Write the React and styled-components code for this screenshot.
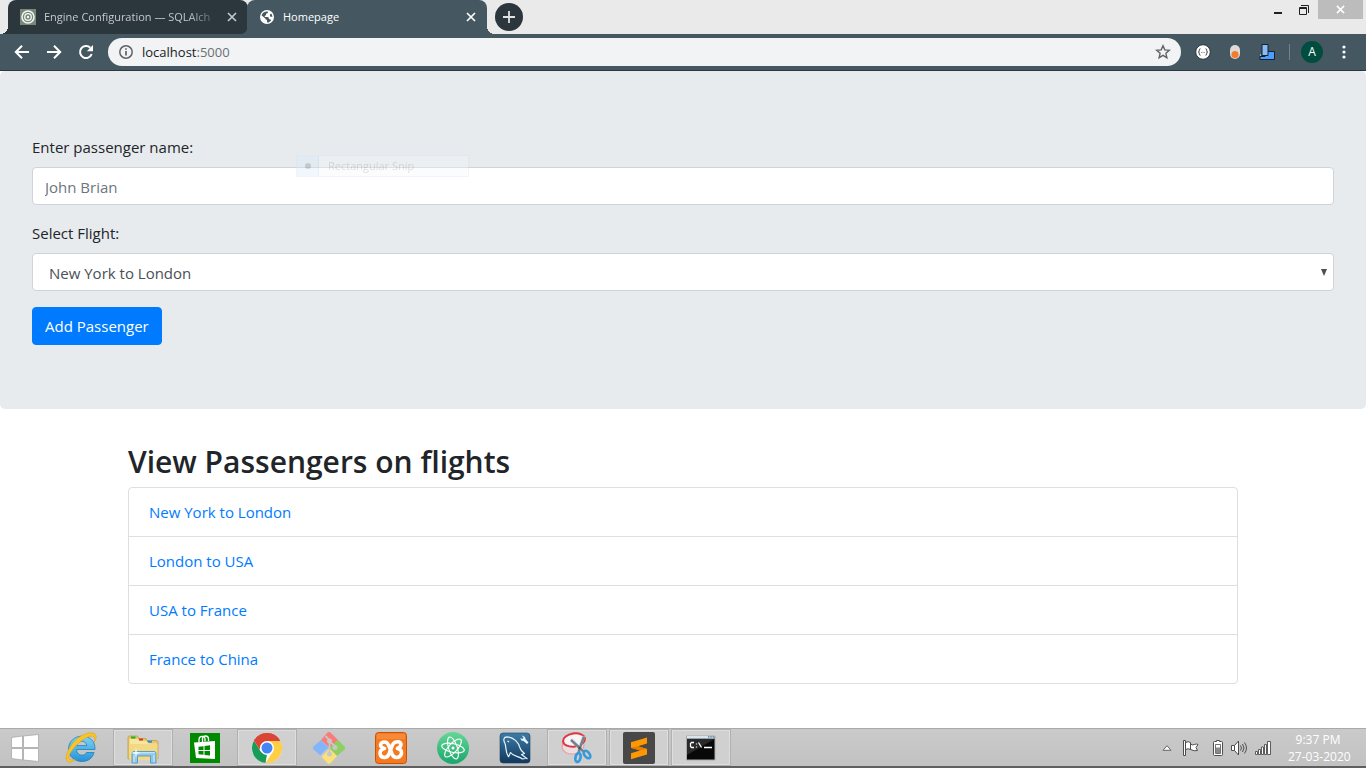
import React from "react";
import styled, { createGlobalStyle, css } from "styled-components";

const GlobalStyle = createGlobalStyle`
  *, *::before, *::after { box-sizing: border-box; }
  body {
    margin: 0;
    background: #fff;
    color: #212529;
    font-family: "Segoe UI", "Open Sans", "Noto Sans", sans-serif;
    font-size: 15px;
    line-height: 24px;
  }
  button, input, select { font: inherit; }
  svg { display: block; flex: none; }
`;

const Screen = styled.div`
  min-height: 100vh;
  display: flex;
  flex-direction: column;
`;

/* ---------- browser window ---------- */

const TabStrip = styled.header`
  display: flex;
  height: 34px;
  padding-left: 8px;
  background: #eaeaea;
`;

const Tab = styled.div`
  position: relative;
  display: flex;
  align-items: center;
  width: 240px;
  padding: 0 11px 0 12px;
  gap: 8px;
  border-radius: 8px 8px 0 0;
  font-size: 11px;
  line-height: 16px;
  color: ${(p) => (p.$active ? "#fff" : "#c3c8cb")};
  background: ${(p) => (p.$active ? "#455761" : "#2b363d")};
  ${(p) =>
    p.$active
      ? css`
          margin-left: -1px;
          &::after {
            content: "";
            position: absolute;
            left: 100%;
            bottom: 0;
            width: 8px;
            height: 8px;
            background: radial-gradient(circle at 100% 0, transparent 8px, #455761 8px);
          }
        `
      : css`
          border-bottom-right-radius: 8px;
          box-shadow: 4px 8px 0 -4px #455761;
          &::before {
            content: "";
            position: absolute;
            right: 100%;
            bottom: 0;
            width: 8px;
            height: 8px;
            background: radial-gradient(circle at 0 0, transparent 8px, #2b363d 8px);
          }
        `}
`;

const TabTitle = styled.span`
  flex: 1;
  white-space: nowrap;
  ${(p) =>
    p.$fade &&
    css`
      mask-image: linear-gradient(to right, #000 calc(100% - 32px), rgba(0, 0, 0, 0.1));
    `}
`;

const PlainButton = styled.button`
  display: grid;
  place-items: center;
  padding: 0;
  border: 0;
  background: none;
  color: inherit;
`;

const TabClose = styled(PlainButton)`
  width: 10px;
  height: 16px;
`;

const NewTab = styled(PlainButton)`
  align-self: center;
  width: 28px;
  height: 28px;
  margin-left: 8px;
  border-radius: 50%;
  background: #2b363d;
  color: #dfe3e5;
`;

const WindowControls = styled.div`
  display: flex;
  margin-left: auto;
  margin-right: 3px;
  color: #202020;
`;

const WindowButton = styled(PlainButton)`
  width: ${(p) => (p.$close ? 45 : 26)}px;
  height: 19px;
  ${(p) => p.$close && "margin-left: 1px; background: #bcbcbc; color: #fff;"}
`;

const Toolbar = styled.nav`
  display: flex;
  align-items: center;
  height: 37px;
  padding: 0 6px;
  border-bottom: 1px solid #2c373e;
  background: #455761;
  color: #fff;
`;

const ToolButton = styled(PlainButton)`
  width: 32px;
  height: 32px;
`;

const Omnibox = styled.div`
  flex: 1;
  display: flex;
  align-items: center;
  height: 28px;
  margin: 0 6px;
  padding: 0 10px;
  gap: 8px;
  border-radius: 14px;
  background: #f1f3f4;
  color: #5f6368;
`;

const Address = styled.div`
  flex: 1;
  font-size: 13px;
  line-height: 20px;
  color: #6b6f73;
  b { font-weight: 400; color: #202124; }
`;

const Divider = styled.i`
  width: 1px;
  height: 16px;
  margin: 0 11px 0 6px;
  background: #74838b;
`;

const Avatar = styled(PlainButton)`
  width: 22px;
  height: 22px;
  margin-right: 5px;
  border-radius: 50%;
  background: #004d40;
  font-size: 12px;
  line-height: 16px;
  color: #fff;
`;

/* ---------- web page ---------- */

const Page = styled.main`
  flex: 1;
`;

const Jumbotron = styled.form`
  position: relative;
  display: flex;
  flex-direction: column;
  align-items: stretch;
  padding: 64px 32px;
  border-radius: 5px;
  background: #e8ebee;
`;

const Field = styled.div`
  display: flex;
  flex-direction: column;
  gap: 8px;
  margin-bottom: 16px;
`;

const controlStyle = css`
  width: 100%;
  height: 38px;
  border: 1px solid #ced4da;
  border-radius: 4px;
  background: #fff;
  color: #495057;
  outline: none;
`;

const TextInput = styled.input`
  ${controlStyle}
  padding: 8px 12px 6px;
  &::placeholder { color: #6c757d; opacity: 1; }
`;

const SelectBox = styled.div`
  position: relative;
  svg {
    position: absolute;
    right: 7px;
    top: 16px;
    pointer-events: none;
  }
`;

const Select = styled.select`
  ${controlStyle}
  appearance: none;
  padding: 7px 16px 6px;
`;

const PrimaryButton = styled.button`
  align-self: flex-start;
  height: 38px;
  padding: 0 12px;
  border: 1px solid #007bff;
  border-radius: 4px;
  background: #007bff;
  color: #fff;
`;

const SnipGhost = styled.div`
  position: absolute;
  left: 296px;
  top: 84px;
  display: flex;
  align-items: center;
  width: 173px;
  height: 22px;
  border: 1px solid #cfe4f7;
  background: #f4f8fc;
  font-size: 11px;
  line-height: 16px;
  color: #a8a8a8;
  opacity: 0.35;
  pointer-events: none;
`;

const GhostMark = styled.span`
  display: grid;
  place-items: center;
  width: 22px;
  height: 20px;
  margin-right: 9px;
  border-right: 1px solid #b9d8f4;
  background: #dcebfa;
`;

const Container = styled.section`
  max-width: 1140px;
  margin: 32px auto 44px;
  padding: 0 15px;
`;

const Heading = styled.h2`
  margin: 0 0 4px;
  font-size: 30px;
  font-weight: 600;
  line-height: 42px;
`;

const FlightList = styled.ul`
  margin: 0;
  padding: 0;
  list-style: none;
  border: 1px solid #dfdfdf;
  border-radius: 4px;
`;

const FlightItem = styled.li`
  padding: 12px 20px;
  & + & { border-top: 1px solid #dfdfdf; }
`;

const FlightLink = styled.a`
  color: #007bff;
  text-decoration: none;
`;

/* ---------- desktop taskbar ---------- */

const Taskbar = styled.footer`
  display: flex;
  height: 40px;
  border-top: 1px solid #a9a9a9;
  border-bottom: 2px solid #5f5f5f;
  background: linear-gradient(#cacaca, #c2c2c2);
`;

const StartButton = styled(PlainButton)`
  width: 51px;
  padding-right: 2px;
`;

const Apps = styled.div`
  display: flex;
  gap: 2px;
`;

const AppButton = styled(PlainButton)`
  width: 60px;
  padding-top: 1px;
  ${(p) =>
    p.$open &&
    css`
      background: #d0d0d0;
      box-shadow: inset 0 0 0 1px #b0b0b0, inset 0 0 0 2px #dedede;
    `}
`;

const Tray = styled.div`
  display: flex;
  align-items: center;
  margin-left: auto;
  padding-right: 18px;
`;

const TrayButton = styled(PlainButton)`
  width: 24px;
  height: 24px;
  margin-right: ${(p) => p.$gap || 0}px;
`;

const Clock = styled.time`
  width: 60px;
  margin-left: 13px;
  font-size: 12px;
  line-height: 17px;
  text-align: center;
  white-space: nowrap;
  color: #fff;
`;

/* ---------- drawings ---------- */

const CloseIcon = ({ size = 10 }) => (
  <svg width={size} height={size} viewBox="0 0 10 10" fill="none" stroke="currentColor" strokeWidth="1.7">
    <path d="M1 1l8 8M9 1L1 9" />
  </svg>
);

const App32 = ({ children }) => (
  <svg width="32" height="32" viewBox="0 0 32 32" fill="none">{children}</svg>
);

const IeIcon = () => (
  <App32>
    <defs>
      <linearGradient id="ie" x1="0" y1="0" x2="0" y2="1">
        <stop offset="0" stopColor="#7fd4f6" />
        <stop offset="1" stopColor="#2592d6" />
      </linearGradient>
    </defs>
    <path d="M30 17.500H11.500c.3 3.600 2.400 5.700 5.400 5.700 2.200 0 3.600-.9 4.500-2.700h7.700C27.300 26.500 23 29.500 17 29.500 9.300 29.500 3.500 24.200 3.500 17 3.500 9.800 9.300 4.200 16.800 4.200 25.200 4.200 30.400 9.500 30 17.500zM21.800 13.600c-.4-2.800-2.300-4.400-5.100-4.400s-4.600 1.600-5.100 4.400z" fill="url(#ie)" stroke="#2180bd" strokeWidth=".8" />
    <path d="M2.500 29.800C-1.500 25.800 4 13 13 6 19.500 1 28 -.8 30.500 2.500c1.400 1.900.5 5-1.400 8 .9-3 .8-4.800-.3-5.700-2.200-1.800-8 .2-13.200 4.700C8 15.800 2.700 23.400 4 26.600c.7 1.800 3.500 1.700 6.400.6-3 2.500-6.400 4.100-7.900 2.600z" fill="#f6c52c" stroke="#dc9d10" strokeWidth=".5" />
  </App32>
);

const ExplorerIcon = () => (
  <App32>
    <path d="M1 5.500q0-1.500 1.500-1.500h8l1.500 2.500h7l1 2h9q2 0 2 2V27H1z" fill="#e8c768" stroke="#b99743" strokeWidth=".7" />
    <path d="M4 4.500h4.500v2H4z" fill="#19b52c" />
    <path d="M12 6.500h4v2h-4z" fill="#d93a26" />
    <path d="M20 8.700h5v2h-5z" fill="#2f8ade" />
    <path d="M2.500 7H11l1.500 2H20l1.500 2.500H30V27H2.500z" fill="#f8e6a0" />
    <path d="M2.500 12h28v16h-28z" fill="#f3d985" />
    <path d="M5 31V21.500q0-2 2-2h20q2 0 2 2V31h-5.500v-7h-13v7z" fill="#8cc7ea" stroke="#4c91bd" strokeWidth=".8" />
    <path d="M6 20.800h22M7 23v7.500M27 23v7.500" stroke="#d5effc" />
    <path d="M9 15l.8 5 4.200 1-4.200 1-.8 5-.8-5L4 21l4.200-1z" fill="#eefaff" />
  </App32>
);

const StoreIcon = () => (
  <App32>
    <path d="M1 1h30v30H1z" fill="#008a00" />
    <path d="M5 10.500l21-1.500v18L7 26z" fill="#fff" />
    <path d="M10 10V7.500q0-3 3-3.200 3-.2 3 2.700V9.500M13.500 10V6.500q.4-2.500 3-2.500 3 0 3 3V9" stroke="#fff" strokeWidth="1.300" />
    <path d="M9.500 14.800l5-.6v3.800h-5zm6-.7l5.500-.8V18h-5.500zM9.500 19h5v3.800l-5-.6zm6 0H21v4.600l-5.500-.6z" fill="#008a00" />
  </App32>
);

const ChromeIcon = () => (
  <App32>
    <circle cx="16" cy="16" r="15" fill="#fff" />
    <path d="M16 16L3 8.500a15 15 0 0 1 26 0z" fill="#da4536" />
    <path d="M3 8.500L9.900 19.800 16 22.500 14.500 31A15 15 0 0 1 3 8.500z" fill="#189c59" />
    <path d="M16 9h13.300A15 15 0 0 1 14.500 31L22 19.500z" fill="#fecf46" />
    <path d="M3 8.500A15 15 0 0 1 29.300 9H16l-6 3.500-1.500 5z" fill="#da4536" />
    <circle cx="16" cy="16" r="7" fill="#fff" />
    <circle cx="16" cy="16" r="5.500" fill="#4285f4" />
  </App32>
);

const GitIcon = () => (
  <App32>
    <path d="M16 0q1 0 1.700.700L25 8l-8 8-9-8L14.300.700Q15 0 16 0z" fill="#fb7b78" />
    <path d="M25 8l6.500 6.500q1 1.500 0 3L24 24l-8-8z" fill="#8bd060" />
    <path d="M16 16l8 8-6.500 7.300q-1.500 1-3 0L8 24z" fill="#fbe178" />
    <path d="M8 8l8 8-8 8L.500 17.500q-1-1.500 0-3z" fill="#83b5fb" />
    <path d="M12.500 4l4 4v15M17 9.500l6 6M8 24l7-7" stroke="#c7c7c7" strokeWidth="1.800" />
    <circle cx="16.500" cy="9" r="2.500" fill="#c7c7c7" />
    <circle cx="22" cy="15.500" r="2.500" fill="#c7c7c7" />
    <circle cx="16.500" cy="22" r="2.500" fill="#c7c7c7" />
  </App32>
);

const XamppIcon = () => (
  <App32>
    <rect x=".5" y=".5" width="31" height="31" rx="3" fill="#f47920" stroke="#cc5200" />
    <path d="M2 2h28v5H2z" fill="#fa9a55" opacity=".5" />
    <path d="M19.500 10.500q5.500-2 6.500 1.500 0 3-3.500 4.500 4.500 1 4 5-1 4-5 4-3 0-4.500-3.500l-3-8q-1.500-4-4.500-4-3.500 0-4 3 0 2.500 4 3.500-4.500 1-4.500 5 .5 4 4.500 4 3 0 4.500-3.500l3-8q1-2.500 2.500-3.500" stroke="#fff" strokeWidth="3.600" strokeLinecap="round" strokeLinejoin="round" />
  </App32>
);

const AtomIcon = () => (
  <App32>
    <defs>
      <linearGradient id="atom" x1="0" y1="0" x2="0" y2="1">
        <stop offset="0" stopColor="#65d797" />
        <stop offset="1" stopColor="#19a66c" />
      </linearGradient>
    </defs>
    <circle cx="16" cy="16" r="16" fill="url(#atom)" />
    <g stroke="#fff" strokeWidth="1.100">
      <ellipse cx="16" cy="16" rx="11.500" ry="4.300" transform="rotate(12 16 16)" />
      <ellipse cx="16" cy="16" rx="11.500" ry="4.300" transform="rotate(72 16 16)" />
      <ellipse cx="16" cy="16" rx="11.500" ry="4.300" transform="rotate(132 16 16)" />
    </g>
    <circle cx="16" cy="16" r="1.500" fill="#fff" />
  </App32>
);

const MysqlIcon = () => (
  <App32>
    <defs>
      <linearGradient id="mysql" x1="0" y1="0" x2="0" y2="1">
        <stop offset="0" stopColor="#3c7ca7" />
        <stop offset="1" stopColor="#12385c" />
      </linearGradient>
    </defs>
    <rect x="1" y="1" width="30" height="30" rx="3" fill="url(#mysql)" stroke="#174569" strokeWidth=".6" />
    <path d="M9.500 25C6 19.500 7.500 15.500 6 11.500 4 8 4.500 4.800 8 4.800c7 .5 12 6 13 11.200.7 2.500 1.500 3.500 4.500 5.500l-3 1 6 4.500M9.500 25l2-4.500c3 4.500 8 3 12 6.500l3-.5" stroke="#e9f4fa" strokeWidth="1.200" strokeLinejoin="round" />
    <path d="M8.500 9l1.500 1" stroke="#e9f4fa" strokeWidth="1.300" />
    <path d="M22.500 3.500l2 2-1 1.500-2-1q0 3 3 3l3.500 3 1.500-1.500-3-3.500q0-3-4-3.500z" fill="#e9f4fa" />
  </App32>
);

const SnipIcon = () => (
  <App32>
    <ellipse cx="12" cy="14" rx="11" ry="8" fill="#e9dfe0" stroke="#eb9ba0" transform="rotate(-8 12 14)" />
    <ellipse cx="13" cy="8" rx="11" ry="6.500" fill="#f8f4f5" stroke="#e0343f" strokeWidth="2" transform="rotate(-8 13 8)" />
    <path d="M22.500 4L17 20M10 7l12 12" stroke="#dfe4e8" strokeWidth="3.500" />
    <path d="M23 4.500L17.500 20M10 8l12.500 11.500" stroke="#73818c" strokeWidth="2.400" />
    <ellipse cx="17" cy="25.500" rx="2.500" ry="4.500" stroke="#3a9ad9" strokeWidth="2.700" transform="rotate(14 17 25.500)" />
    <ellipse cx="26" cy="22.500" rx="2.500" ry="4.300" stroke="#3a9ad9" strokeWidth="2.700" transform="rotate(-38 26 22.500)" />
    <circle cx="18.500" cy="16" r="1.300" fill="#43515c" />
  </App32>
);

const SublimeIcon = () => (
  <App32>
    <rect width="32" height="32" rx="2" fill="#484848" />
    <path d="M24 5.500v6l-9 2.700 9 2.800v5.500L8 27.300v-6l9-2.800-9-2.700v-5.500z" fill="#ff9800" />
    <path d="M8 15.800l9 2.700 7-1.500-9-2.800z" fill="#e67c00" />
  </App32>
);

const CmdIcon = () => (
  <App32>
    <path d="M1.500 4h28.500v24H1.500z" fill="#080808" stroke="#aaa" />
    <path d="M2 4h27.500v2.700H2z" fill="#dae4ed" />
    <path d="M23 4.800h1.500M25.300 4.800h1.500M27.500 4.800H29" stroke="#49739b" strokeWidth="1.300" />
    <path d="M2 7h27.500L2 23z" fill="#3c3c3c" opacity=".65" />
    <path d="M9 10.500H6.500l-1 1v3l1 1H9M11.500 11.500v1M11.500 14.500v1M13.500 10.500l3 5M19 15.500h8" stroke="#fff" strokeWidth="1.300" />
  </App32>
);

const apps = [
  { name: "Internet Explorer", Icon: IeIcon },
  { name: "File Explorer", Icon: ExplorerIcon, open: true },
  { name: "Store", Icon: StoreIcon },
  { name: "Google Chrome", Icon: ChromeIcon, open: true },
  { name: "Git GUI", Icon: GitIcon },
  { name: "XAMPP", Icon: XamppIcon },
  { name: "Atom", Icon: AtomIcon },
  { name: "MySQL Workbench", Icon: MysqlIcon },
  { name: "Snipping Tool", Icon: SnipIcon, open: true },
  { name: "Sublime Text", Icon: SublimeIcon, open: true },
  { name: "Command Prompt", Icon: CmdIcon, open: true },
];

const flights = ["New York to London", "London to USA", "USA to France", "France to China"];

function BrowserChrome() {
  return (
    <>
      <TabStrip>
        <Tab>
          <svg width="16" height="16" viewBox="0 0 16 16" fill="none">
            <path d="M0 0h16v16H0z" fill="#788878" />
            <circle cx="8" cy="8" r="6" stroke="#f5f7f5" strokeWidth="1.500" />
            <circle cx="8" cy="8" r="3.300" stroke="#f5f7f5" strokeWidth="1.300" />
            <circle cx="8" cy="8" r="1.200" fill="#f5f7f5" />
          </svg>
          <TabTitle $fade>Engine Configuration — SQLAlch</TabTitle>
          <TabClose aria-label="Close Engine Configuration tab"><CloseIcon /></TabClose>
        </Tab>
        <Tab $active>
          <svg width="16" height="16" viewBox="0 0 16 16">
            <circle cx="8" cy="8" r="7" fill="#fff" />
            <path d="M7.500 2.600Q9 2 9 3.500q-.2 1-2 1.300V6q0 .7-1.200.8v1.300h2.700q1.500.2 1.500 2 2.200.2 2 1.600L9.500 13.500q-1.500.500-1.500-1V11Q6.500 11 6.300 9.600L2.500 6.200Q4 3 7.500 2.600zM11 6q0-1.500 1.500-1.300l1 3H11.500q-1-.4-.5-1.700z" fill="#455761" />
          </svg>
          <TabTitle>Homepage</TabTitle>
          <TabClose aria-label="Close Homepage tab"><CloseIcon /></TabClose>
        </Tab>
        <NewTab aria-label="New tab">
          <svg width="12" height="12" viewBox="0 0 12 12" stroke="currentColor" strokeWidth="1.800">
            <path d="M6 0v12M0 6h12" />
          </svg>
        </NewTab>
        <WindowControls>
          <WindowButton aria-label="Minimize">
            <svg width="10" height="10" viewBox="0 0 10 10"><path d="M1 7h8v2H1z" fill="currentColor" /></svg>
          </WindowButton>
          <WindowButton aria-label="Restore">
            <svg width="10" height="10" viewBox="0 0 10 10" fill="none" stroke="currentColor">
              <path d="M.500 2.500h7v7h-7zM.500 3.500h7M2 .500h7.500V8" />
            </svg>
          </WindowButton>
          <WindowButton $close aria-label="Close"><CloseIcon size={9} /></WindowButton>
        </WindowControls>
      </TabStrip>
      <Toolbar aria-label="Browser toolbar">
        <ToolButton aria-label="Back">
          <svg width="16" height="16" viewBox="0 0 16 16" fill="none" stroke="currentColor" strokeWidth="2">
            <path d="M15 8H2.500M8 1.700L1.800 8 8 14.300" />
          </svg>
        </ToolButton>
        <ToolButton aria-label="Forward">
          <svg width="16" height="16" viewBox="0 0 16 16" fill="none" stroke="currentColor" strokeWidth="2">
            <path d="M1 8h12.500M8 1.700L14.200 8 8 14.300" />
          </svg>
        </ToolButton>
        <ToolButton aria-label="Reload">
          <svg width="16" height="16" viewBox="0 0 16 16" fill="none">
            <path d="M13.700 10A6 6 0 1 1 12.300 3.800" stroke="currentColor" strokeWidth="2" />
            <path d="M15 1v6.200H8.800z" fill="currentColor" />
          </svg>
        </ToolButton>
        <Omnibox>
          <svg width="16" height="16" viewBox="0 0 16 16" fill="none" stroke="currentColor" strokeWidth="1.500">
            <circle cx="8" cy="8" r="6.200" />
            <path d="M8 7v4.500M8 4.300v1.500" strokeWidth="1.700" />
          </svg>
          <Address><b>localhost</b>:5000</Address>
          <PlainButton aria-label="Bookmark this page">
            <svg width="16" height="16" viewBox="0 0 16 16" fill="none" stroke="currentColor" strokeWidth="1.400">
              <path d="M8 1.800l1.800 4.100 4.500.400-3.400 3 1 4.400L8 11.400l-3.900 2.300 1-4.400-3.400-3 4.500-.400z" />
            </svg>
          </PlainButton>
        </Omnibox>
        <ToolButton aria-label="JSON viewer extension">
          <svg width="16" height="16" viewBox="0 0 16 16" fill="none">
            <circle cx="8" cy="8" r="7.300" fill="#fff" stroke="#2a343a" strokeWidth="1" />
            <path d="M5.500 4.800q-1.500 0-1.200 1.500Q4.500 8 3.300 8q1.200 0 1 1.700-.3 1.500 1.200 1.500M10.500 4.800q1.500 0 1.200 1.500-.2 1.700 1 1.700-1.200 0-1 1.700.3 1.500-1.200 1.500M6.500 8.500h.8M8.700 8.500h.8" stroke="#444" />
          </svg>
        </ToolButton>
        <ToolButton aria-label="Toggle extension">
          <svg width="16" height="16" viewBox="0 0 16 16">
            <rect x="3" y="1" width="10" height="14" rx="5" fill="#ddd9d4" />
            <circle cx="8" cy="10.500" r="3.500" fill="#f47b2b" />
          </svg>
        </ToolButton>
        <ToolButton aria-label="Device extension">
          <svg width="16" height="16" viewBox="0 0 16 16">
            <path d="M6 7.500h9.500v8H1v-3h5z" fill="#4a9eff" stroke="#17232c" />
            <path d="M3 .500h6v11H3z" fill="#88bdf8" stroke="#17232c" />
            <path d="M1 10.500h1v1H1z" fill="#fff" />
          </svg>
        </ToolButton>
        <Divider />
        <Avatar aria-label="Profile">A</Avatar>
        <ToolButton aria-label="Browser menu">
          <svg width="4" height="14" viewBox="0 0 4 14" fill="currentColor">
            <circle cx="2" cy="2" r="1.600" /><circle cx="2" cy="7" r="1.600" /><circle cx="2" cy="12" r="1.600" />
          </svg>
        </ToolButton>
      </Toolbar>
    </>
  );
}

function PassengerForm() {
  return (
    <Jumbotron onSubmit={(e) => e.preventDefault()}>
      <Field>
        <label htmlFor="name">Enter passenger name:</label>
        <TextInput id="name" placeholder="John Brian" />
      </Field>
      <Field>
        <label htmlFor="flight">Select Flight:</label>
        <SelectBox>
          <Select id="flight">
            {flights.map((f) => <option key={f}>{f}</option>)}
          </Select>
          <svg width="6" height="7" viewBox="0 0 6 7"><path d="M0 0h6L3 7z" fill="#495057" /></svg>
        </SelectBox>
      </Field>
      <PrimaryButton>Add Passenger</PrimaryButton>
      <SnipGhost>
        <GhostMark>
          <svg width="6" height="6" viewBox="0 0 6 6"><circle cx="3" cy="3" r="3" fill="#8a8f94" /></svg>
        </GhostMark>
        Rectangular Snip
      </SnipGhost>
    </Jumbotron>
  );
}

function DesktopTaskbar() {
  return (
    <Taskbar>
      <StartButton aria-label="Start">
        <svg width="28" height="28" viewBox="0 0 28 28">
          <path d="M.500 3.500L11.500 2v11.500H.500zM12.500 2L27.500.500v13h-15zM.500 14.500h11V26L.500 24.500zM12.500 14.500h15v13L12.500 26z" fill="#fff" stroke="#aaa" strokeWidth=".8" />
        </svg>
      </StartButton>
      <Apps>
        {apps.map(({ name, Icon, open }) => (
          <AppButton key={name} $open={open} aria-label={name}><Icon /></AppButton>
        ))}
      </Apps>
      <Tray>
        <TrayButton aria-label="Show hidden icons">
          <svg width="10" height="6" viewBox="0 0 10 6"><path d="M5 .700L9 5.300H1z" fill="#fff" stroke="#666" /></svg>
        </TrayButton>
        <TrayButton $gap={3} aria-label="Action Center">
          <svg width="16" height="16" viewBox="0 0 16 16" fill="#fff" stroke="#4d4d4d">
            <path d="M.500.500h2v15h-2zM2.500 2.500q3-1.500 5 0v7q-2-1.500-5 0zM7.500 4q2 1.500 4 .500t3.500 0l-2 3 1.500 3q-3 1-7-1z" />
          </svg>
        </TrayButton>
        <TrayButton aria-label="Battery" $gap={-3}>
          <svg width="10" height="16" viewBox="0 0 10 16" fill="#fff" stroke="#4d4d4d">
            <path d="M3.500.500h3v1h2q1 0 1 1v12q0 1-1 1h-7q-1 0-1-1v-12q0-1 1-1h2z" />
            <path d="M3 7.500h4V13H3z" fill="#8a8a8a" stroke="none" />
            <path d="M2.500 4.500h5v9h-5z" fill="none" strokeWidth=".8" />
          </svg>
        </TrayButton>
        <TrayButton aria-label="Volume">
          <svg width="16" height="16" viewBox="0 0 16 16" fill="#fff" stroke="#4d4d4d">
            <path d="M.500 5.500h3l4-4.500v14l-4-4.500h-3zM3.500 5.500v5" />
            <path d="M9.500 5.500q2 2.500 0 5M11.500 4q3 4 0 8M13.500 2.500q4 5.500 0 11" fill="none" />
          </svg>
        </TrayButton>
        <TrayButton aria-label="Network">
          <svg width="16" height="14" viewBox="0 0 16 14" fill="#fff" stroke="#4d4d4d" strokeWidth=".9">
            <path d="M.500 10.500h2v3h-2zM3.500 8.500h2v5h-2zM6.500 6h2v7.500h-2zM9.500 3.500h2v10h-2zM12.500.500h3v13h-3z" />
          </svg>
        </TrayButton>
        <Clock dateTime="2020-03-27T21:37">9:37 PM<br />27-03-2020</Clock>
      </Tray>
    </Taskbar>
  );
}

export default function App() {
  return (
    <Screen>
      <GlobalStyle />
      <BrowserChrome />
      <Page>
        <PassengerForm />
        <Container>
          <Heading>View Passengers on flights</Heading>
          <FlightList>
            {flights.map((f) => (
              <FlightItem key={f}><FlightLink href="#">{f}</FlightLink></FlightItem>
            ))}
          </FlightList>
        </Container>
      </Page>
      <DesktopTaskbar />
    </Screen>
  );
}
